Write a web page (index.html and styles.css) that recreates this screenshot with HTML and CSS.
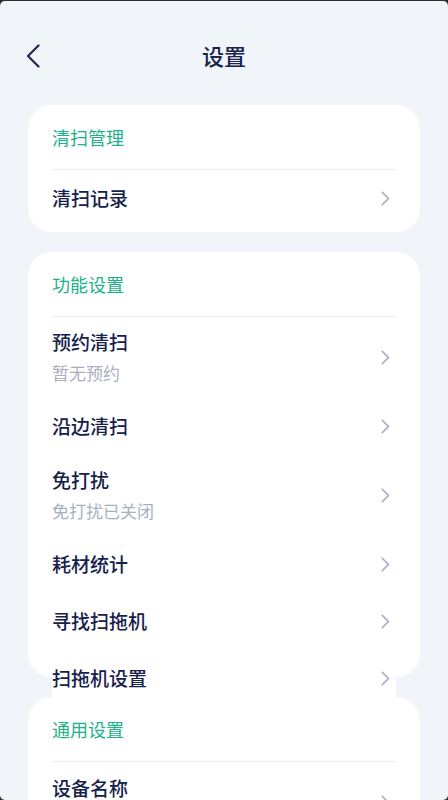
FILE: index.html
```html
<!DOCTYPE html>
<html lang="zh-CN">
<head>
<meta charset="utf-8">
<title>设置</title>
<link rel="stylesheet" href="styles.css">
</head>
<body>
<div class="app">
  <header class="topbar">
    <button class="back" aria-label="返回">
      <svg width="14" height="24" viewBox="0 0 14 24"><path d="M12.5 1.5 L2 12 L12.5 22.5" fill="none" stroke="#1b2a56" stroke-width="2.2" stroke-linecap="round" stroke-linejoin="round"/></svg>
    </button>
    <h1 class="title">设置</h1>
    <span class="spacer"></span>
  </header>

  <section class="card">
    <div class="card-title">清扫管理</div>
    <div class="row">
      <div class="row-text"><div class="row-main">清扫记录</div></div>
      <svg class="chev" width="9" height="15" viewBox="0 0 9 15"><path d="M1.2 1.2 L7.5 7.5 L1.2 13.8" fill="none" stroke="#a4acc0" stroke-width="1.6" stroke-linecap="round" stroke-linejoin="round"/></svg>
    </div>
  </section>

  <section class="card card-fixed">
    <div class="card-title">功能设置</div>
    <div class="row row-double">
      <div class="row-text"><div class="row-main">预约清扫</div><div class="row-sub">暂无预约</div></div>
      <svg class="chev" width="9" height="15" viewBox="0 0 9 15"><path d="M1.2 1.2 L7.5 7.5 L1.2 13.8" fill="none" stroke="#a4acc0" stroke-width="1.6" stroke-linecap="round" stroke-linejoin="round"/></svg>
    </div>
    <div class="row">
      <div class="row-text"><div class="row-main">沿边清扫</div></div>
      <svg class="chev" width="9" height="15" viewBox="0 0 9 15"><path d="M1.2 1.2 L7.5 7.5 L1.2 13.8" fill="none" stroke="#a4acc0" stroke-width="1.6" stroke-linecap="round" stroke-linejoin="round"/></svg>
    </div>
    <div class="row row-double">
      <div class="row-text"><div class="row-main">免打扰</div><div class="row-sub">免打扰已关闭</div></div>
      <svg class="chev" width="9" height="15" viewBox="0 0 9 15"><path d="M1.2 1.2 L7.5 7.5 L1.2 13.8" fill="none" stroke="#a4acc0" stroke-width="1.6" stroke-linecap="round" stroke-linejoin="round"/></svg>
    </div>
    <div class="row">
      <div class="row-text"><div class="row-main">耗材统计</div></div>
      <svg class="chev" width="9" height="15" viewBox="0 0 9 15"><path d="M1.2 1.2 L7.5 7.5 L1.2 13.8" fill="none" stroke="#a4acc0" stroke-width="1.6" stroke-linecap="round" stroke-linejoin="round"/></svg>
    </div>
    <div class="row">
      <div class="row-text"><div class="row-main">寻找扫拖机</div></div>
      <svg class="chev" width="9" height="15" viewBox="0 0 9 15"><path d="M1.2 1.2 L7.5 7.5 L1.2 13.8" fill="none" stroke="#a4acc0" stroke-width="1.6" stroke-linecap="round" stroke-linejoin="round"/></svg>
    </div>
    <div class="row">
      <div class="row-text"><div class="row-main">扫拖机设置</div></div>
      <svg class="chev" width="9" height="15" viewBox="0 0 9 15"><path d="M1.2 1.2 L7.5 7.5 L1.2 13.8" fill="none" stroke="#a4acc0" stroke-width="1.6" stroke-linecap="round" stroke-linejoin="round"/></svg>
    </div>
  </section>

  <section class="card">
    <div class="card-title">通用设置</div>
    <div class="row row-double">
      <div class="row-text row-text-top"><div class="row-main">设备名称</div></div>
      <svg class="chev" width="9" height="15" viewBox="0 0 9 15"><path d="M1.2 1.2 L7.5 7.5 L1.2 13.8" fill="none" stroke="#a4acc0" stroke-width="1.6" stroke-linecap="round" stroke-linejoin="round"/></svg>
    </div>
  </section>
</div>
</body>
</html>
```

FILE: styles.css
```css
* { box-sizing: border-box; }
html, body {
  margin: 0;
  padding: 0;
  background: #2e2e2e;
  height: 800px;
  overflow: hidden;
}
body {
  font-family: "Noto Sans CJK SC", "Noto Sans", sans-serif;
}
.app {
  margin-top: 1px;
  height: 799px;
  background: #f1f4f9;
  border-radius: 5px;
  overflow: hidden;
}
.topbar {
  height: 104px;
  display: grid;
  grid-template-columns: 1fr auto 1fr;
  align-items: start;
  padding-top: 39px;
}
.back {
  justify-self: start;
  margin-left: 26px;
  margin-top: 4px;
  padding: 0;
  border: 0;
  background: none;
  display: flex;
}
.title {
  margin: 0;
  font-size: 22px;
  line-height: 30px;
  font-weight: 500;
  color: #17224d;
}
.card {
  margin: 0 28px 20px;
  background: #fff;
  border-radius: 24px;
  padding: 0 24px 5px;
}
.card-fixed {
  height: 425px;
}
.card-title {
  height: 65px;
  line-height: 64px;
  font-size: 18px;
  color: #1bb28b;
  border-bottom: 1px solid #e9edf4;
}
.row {
  min-height: 57px;
  display: flex;
  align-items: center;
  justify-content: space-between;
  background: #fff;
}
.row-double {
  min-height: 81px;
}
.row-text {
  display: flex;
  flex-direction: column;
  padding-bottom: 2px;
}
.row-double .row-text-top {
  padding-bottom: 30px;
}
.row-main {
  font-size: 19px;
  line-height: 26px;
  font-weight: 500;
  color: #16214b;
}
.row-sub {
  margin-top: 6px;
  font-size: 17px;
  line-height: 24px;
  color: #a9afbf;
}
.chev {
  margin-right: 6px;
  flex: none;
}
```
